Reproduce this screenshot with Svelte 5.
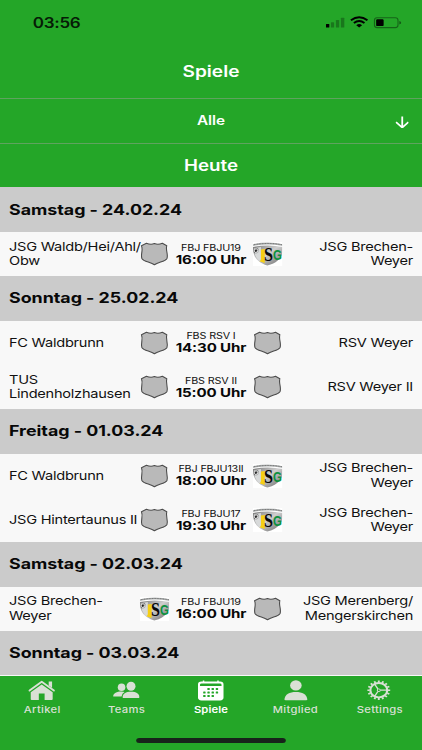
<script>
  /**
   * Spiele - match schedule grouped by day
   */
  const sections = [
    {
      date: 'Samstag - 24.02.24',
      games: [
        { home: 'JSG Waldb/Hei/Ahl/\nObw', away: 'JSG Brechen-\nWeyer', league: 'FBJ FBJU19', time: '16:00', awayClub: true }
      ]
    },
    {
      date: 'Sonntag - 25.02.24',
      games: [
        { home: 'FC Waldbrunn', away: 'RSV Weyer', league: 'FBS RSV I', time: '14:30' },
        { home: 'TUS\nLindenholzhausen', away: 'RSV Weyer II', league: 'FBS RSV II', time: '15:00' }
      ]
    },
    {
      date: 'Freitag - 01.03.24',
      games: [
        { home: 'FC Waldbrunn', away: 'JSG Brechen-\nWeyer', league: 'FBJ FBJU13II', time: '18:00', awayClub: true },
        { home: 'JSG Hintertaunus II', away: 'JSG Brechen-\nWeyer', league: 'FBJ FBJU17', time: '19:30', awayClub: true }
      ]
    },
    {
      date: 'Samstag - 02.03.24',
      games: [
        { home: 'JSG Brechen-\nWeyer', away: 'JSG Merenberg/\nMengerskirchen', league: 'FBJ FBJU19', time: '16:00', homeClub: true }
      ]
    },
    { date: 'Sonntag - 03.03.24', games: [] }
  ];

  const tabs = ['Artikel', 'Teams', 'Spiele', 'Mitglied', 'Settings'];
  const teeth = Array.from({ length: 16 }, (_, i) => i * 22.5);

  let activeTab = $state('Spiele');
</script>

{#snippet crest(club)}
  {#if club}
    <svg class="crest" viewBox="0 0 30 24" preserveAspectRatio="none">
      <defs>
        <linearGradient id="metal" x1="0" y1="0" x2="1" y2="1">
          <stop offset="0" stop-color="#777" />
          <stop offset="0.45" stop-color="#cfcfcf" />
          <stop offset="1" stop-color="#666" />
        </linearGradient>
      </defs>
      <rect width="30" height="24" fill="#fff" />
      <path d="M0 2.2Q15-1 30 2.2V4Q15 1.2 0 4Z" fill="#b5b8b8" />
      <path d="M1 2.7Q15 .3 29 2.7" fill="none" stroke="#555" stroke-width=".8" stroke-dasharray="1 .6" />
      <path d="M0 5Q15 1.8 30 5C30 14 27 20 14.5 23.6C4 20 0 15 0 5Z" fill="url(#metal)" />
      <path d="M1 6.2L8 5V19.5C3 17 1 12 1 6.2Z" fill="#d8dada" />
      <circle cx="3" cy="8.7" r="2.4" fill="#f4f4f4" stroke="#777" stroke-width=".5" />
      <path d="M2.2 8L3.4 7.5L4.1 8.7L3.2 9.7L2 9.3ZM4.6 6.3L5.4 7.3M1.1 10.4L2 11" fill="#222" stroke="#222" stroke-width=".6" />
      <path d="M8 7.6L11.8 7V21L6.6 19.3Q8 18.6 8 17Z" fill="#f6cf13" />
      <text class="club-s" x="11.2" y="18.8" textLength="9" lengthAdjust="spacingAndGlyphs">S</text>
      <text class="club-g" x="20.2" y="18" textLength="9" lengthAdjust="spacingAndGlyphs">G</text>
    </svg>
  {:else}
    <svg class="crest" viewBox="0 0 30 24" preserveAspectRatio="none">
      <path
        d="M6.6 1.2Q10.8 3 14.6 1.6Q18.4 3 22.6 1.2L27 3.7C25.6 8 28.6 12 27.2 16.4C25.4 19.8 18.4 19.8 14.6 22.8C10.8 19.8 3.8 19.8 2 16.4C.6 12 3.6 8 1.6 3.7Z"
        fill="#b9b9b9" stroke="#4c4c4c" stroke-width="1.1" stroke-linejoin="round"
      />
    </svg>
  {/if}
{/snippet}

{#snippet tabIcon(name)}
  <svg class="tab-icon" viewBox="0 0 30 22" preserveAspectRatio="none" fill="currentColor">
    {#if name === 'Artikel'}
      <path d="M2.8 10.6L15 1.8L27.2 10.6" fill="none" stroke="currentColor" stroke-width="1.9" stroke-linejoin="round" stroke-linecap="round" />
      <path d="M22 1.6H25.4V8L22 5.6Z" />
      <path d="M15 4.6L26 12.2V19.2Q26 20 25 20H17.9V13.4H12.1V20H5Q4 20 4 19.2V12.2Z" />
    {:else if name === 'Teams'}
      <circle cx="9.7" cy="7.2" r="3.8" />
      <path d="M1.3 16.6C1.3 13.2 5 11.6 9.6 11.6Q11.5 11.6 12.7 12.1Q10.1 13.4 9.7 16.6Z" />
      <circle cx="19.2" cy="6.2" r="4.5" />
      <path d="M10.8 17.4C10.5 13.6 14 11.7 19.2 11.7S27.8 13.6 27.5 17.4Q27.4 17.9 26.5 17.9H11.8Q10.9 17.9 10.8 17.4Z" />
    {:else if name === 'Spiele'}
      <path fill-rule="evenodd" d="M5.7 1.6H7V.4H8.5V1.6H21.5V.4H23V1.6H24.3Q27.8 1.6 27.8 4.4V17.6Q27.8 20.4 24.3 20.4H5.7Q2.2 20.4 2.2 17.6V4.4Q2.2 1.6 5.7 1.6ZM4.2 4.7V5.9H25.8V4.7Q25.8 3.5 24.2 3.5H5.8Q4.2 3.5 4.2 4.7Z" />
      <g class="cut">
        {#each [9.1, 12.5, 16] as y, row}
          {#each [8.6, 12.8, 17, 21.2] as x, col}
            {#if !(row === 0 && col === 0) && !(row === 2 && col === 3)}
              <rect x={x - 1.2} y={y - 1} width="2.4" height="2" rx=".5" />
            {/if}
          {/each}
        {/each}
      </g>
    {:else if name === 'Mitglied'}
      <ellipse cx="15" cy="5.4" rx="5.8" ry="5.2" />
      <path d="M3.5 19.4C4 14.4 8.6 12 15 12S26 14.4 26.5 19.4Q26.5 20.2 25.3 20.2H4.8Q3.5 20.2 3.5 19.4Z" />
    {:else}
      <g transform="translate(14 10.2) scale(1.18 1)" fill="none" stroke="currentColor">
        <circle r="7.2" stroke-width="1.9" />
        {#each teeth as angle}
          <path d="M0-7.8V-9.7" stroke-width="1.6" transform="rotate({angle})" />
        {/each}
        <circle r="1.3" stroke-width=".9" />
        <path d="M1.5 0H7M-.8 1.3L-3.5 6M-.8-1.3L-3.5-6" stroke-width="1.2" />
      </g>
    {/if}
  </svg>
{/snippet}

<div class="viewport">
  <div class="screen">
    <header>
      <div class="status-bar">
        <span class="clock">03:56</span>
        <svg class="status-icons" viewBox="0 0 76 14" preserveAspectRatio="none">
          <rect x="0" y="9" width="3.4" height="3.5" rx=".6" />
          <g opacity=".28">
            <rect x="5" y="7.2" width="3.2" height="5.3" rx=".6" />
            <rect x="10" y="5" width="3.3" height="7.5" rx=".6" />
            <rect x="15" y="2.7" width="3.4" height="9.8" rx=".6" />
          </g>
          <path d="M25 5.3Q33.3-.6 41.6 5.3M28 8Q33.3 4 38.6 8" fill="none" stroke="#000" stroke-width="2" />
          <path d="M30.4 10.2Q33.3 8 36.2 10.2L33.3 12.6Z" />
          <rect x="48.6" y="2.8" width="23.6" height="9.8" rx="2.6" fill="none" stroke="#000" stroke-opacity=".4" stroke-width="1.1" />
          <rect x="50.3" y="4.3" width="7.5" height="6.8" rx="1.2" />
          <path d="M73.5 6V9.5Q75.5 8.8 75.5 7.75T73.5 6Z" opacity=".45" />
        </svg>
      </div>
      <h1>Spiele</h1>
    </header>

    <div class="filter">
      <span>Alle</span>
      <svg class="arrow" viewBox="0 0 14 13" preserveAspectRatio="none">
        <path d="M7 .4V12M.8 6.4L7 12L13.2 6.4" fill="none" stroke="#fff" stroke-width="1.8" />
      </svg>
    </div>
    <div class="today">Heute</div>

    <main>
      {#each sections as section}
        <h2>{section.date}</h2>
        {#each section.games as game}
          <div class="game">
            <div class="team">{game.home}</div>
            {@render crest(game.homeClub)}
            <div class="kickoff">
              <span class="league">{game.league}</span>
              <span class="time">{game.time} Uhr</span>
            </div>
            {@render crest(game.awayClub)}
            <div class="team away">{game.away}</div>
          </div>
        {/each}
      {/each}
    </main>

    <nav>
      <div class="tabs">
        {#each tabs as tab}
          <button class:active={activeTab === tab} onclick={() => (activeTab = tab)}>
            {@render tabIcon(tab)}
            <span>{tab}</span>
          </button>
        {/each}
      </div>
      <div class="home-indicator"></div>
    </nav>
  </div>
</div>

<style>
  :global(body) {
    margin: 0;
  }

  .viewport {
    width: 422px;
    height: 750px;
    overflow: hidden;
    background: #24a628;
  }

  /* the layout is drawn narrow and widened to the full viewport */
  .screen {
    --green: #24a628;
    display: flex;
    flex-direction: column;
    width: 347px;
    height: 750px;
    transform: scaleX(1.21615);
    transform-origin: 0 0;
    background: var(--green);
    font-family: Inter, 'Liberation Sans', sans-serif;
    color: #111;
  }

  .screen * {
    box-sizing: border-box;
  }

  svg {
    display: block;
    flex: none;
  }

  header {
    height: 98px;
    flex: none;
  }

  .status-bar {
    display: flex;
    align-items: center;
    justify-content: space-between;
    height: 44px;
    padding: 0 16.8px 0 27px;
  }

  .clock {
    font-size: 14px;
    font-weight: 600;
    letter-spacing: -0.25px;
    color: #061c06;
  }

  .status-icons {
    width: 62.4px;
    height: 14px;
  }

  h1 {
    margin: 0;
    line-height: 55px;
    font-size: 15.7px;
    font-weight: 600;
    text-align: center;
    color: #fff;
  }

  .filter,
  .today {
    display: flex;
    flex: none;
    align-items: center;
    justify-content: center;
    height: 44.5px;
    border-top: 1.5px solid #5fa35f;
    font-weight: 600;
    color: #fff;
  }

  .filter {
    position: relative;
    font-size: 12.6px;
  }

  .arrow {
    position: absolute;
    right: 10.6px;
    top: 16.5px;
    width: 11.5px;
    height: 12.5px;
  }

  .today {
    font-size: 15.4px;
  }

  main {
    flex: none;
    height: 489px;
    padding-top: 0.6px;
    overflow: hidden;
    background: #f8f8f8;
    box-shadow: inset 0 1px #cbcbcb;
  }

  h2 {
    margin: 0;
    height: 44.33px;
    padding-left: 7.4px;
    line-height: 44.5px;
    font-size: 14.7px;
    font-weight: 700;
    letter-spacing: -0.03px;
    background: #cbcbcb;
    color: #080808;
  }

  .game {
    display: flex;
    align-items: center;
    height: 44.33px;
    padding: 0 7.4px;
  }

  .team {
    flex: 1;
    width: 0;
    font-size: 12px;
    line-height: 14.3px;
    letter-spacing: -0.21px;
    white-space: pre;
  }

  .away {
    display: flex;
    justify-content: flex-end;
    text-align: right;
  }

  .crest {
    width: 24.6px;
    height: 24px;
  }

  .club-s,
  .club-g {
    font-family: 'Liberation Serif', serif;
    font-size: 18px;
    font-weight: 700;
    fill: #080808;
  }

  .club-g {
    font-family: 'Liberation Sans', sans-serif;
    font-size: 14.5px;
    fill: #0d9140;
  }

  .kickoff {
    display: flex;
    flex-direction: column;
    align-items: center;
    width: 68.6px;
    white-space: nowrap;
  }

  .league {
    font-size: 8.9px;
    line-height: 11px;
    letter-spacing: -0.13px;
  }

  .time {
    font-size: 12.4px;
    line-height: 14px;
    font-weight: 700;
    letter-spacing: -0.1px;
    color: #080808;
  }

  nav {
    display: flex;
    flex: 1;
    flex-direction: column;
    align-items: center;
    justify-content: space-between;
    padding: 3.6px 0 7.5px;
  }

  .tabs {
    display: flex;
    width: 100%;
  }

  button {
    display: flex;
    flex: 1;
    flex-direction: column;
    align-items: center;
    width: 0;
    padding: 0;
    border: 0;
    background: none;
    font: 500 9.24px/15px Inter, 'Liberation Sans', sans-serif;
    letter-spacing: 0.24px;
    color: #d9e0d5;
  }

  button.active {
    font-weight: 600;
    letter-spacing: 0.1px;
    color: #fff;
  }

  .tab-icon {
    width: 24.6px;
    height: 22px;
  }

  .cut {
    fill: var(--green);
  }

  .home-indicator {
    width: 123px;
    height: 4.5px;
    border-radius: 3px;
    background: #17231a;
  }
</style>
